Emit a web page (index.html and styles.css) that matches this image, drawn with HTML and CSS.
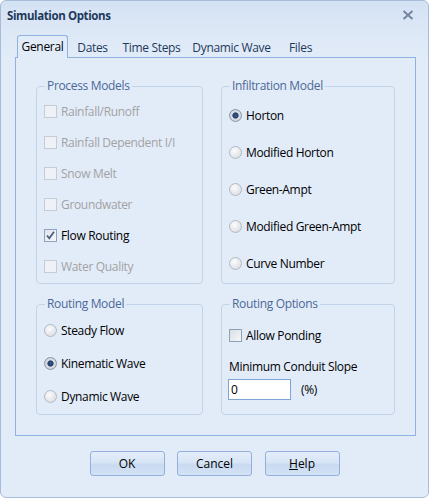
FILE: index.html
```html
<!DOCTYPE html>
<html>
<head>
  <title>Simulation Options</title>
  <link rel="stylesheet" href="styles.css">
</head>
<body>
  <div class="window">
    <div class="titlebar">
      <span class="title">Simulation Options</span>
      <svg class="close" width="12" height="10" viewBox="0 0 12 10">
        <path d="M1.5 1 L10.5 9 M10.5 1 L1.5 9" stroke="#75869e" stroke-width="2"/>
      </svg>
    </div>

    <div class="tabs">
      <div class="tab active" style="width:51px">General</div>
      <div class="tab" style="width:49px">Dates</div>
      <div class="tab" style="width:69px">Time Steps</div>
      <div class="tab" style="width:91px">Dynamic Wave</div>
      <div class="tab" style="width:47px">Files</div>
    </div>

    <div class="panel">
      <fieldset class="group">
        <legend>Process Models</legend>
        <div class="rows checks">
          <label class="item disabled"><span class="box"></span>Rainfall/Runoff</label>
          <label class="item disabled"><span class="box"></span>Rainfall Dependent I/I</label>
          <label class="item disabled"><span class="box"></span>Snow Melt</label>
          <label class="item disabled"><span class="box"></span>Groundwater</label>
          <label class="item"><span class="box checked">
            <svg width="11" height="11" viewBox="0 0 11 11"><path d="M2 5.5 L4.3 8.3 L9 1.8" fill="none" stroke="#4b5f7e" stroke-width="1.8"/></svg>
          </span>Flow Routing</label>
          <label class="item disabled"><span class="box"></span>Water Quality</label>
        </div>
      </fieldset>

      <fieldset class="group">
        <legend>Infiltration Model</legend>
        <div class="rows infil">
          <label class="item"><span class="radio on"></span>Horton</label>
          <label class="item"><span class="radio"></span>Modified Horton</label>
          <label class="item"><span class="radio"></span>Green-Ampt</label>
          <label class="item"><span class="radio"></span>Modified Green-Ampt</label>
          <label class="item"><span class="radio"></span>Curve Number</label>
        </div>
      </fieldset>

      <fieldset class="group">
        <legend>Routing Model</legend>
        <div class="rows routing">
          <label class="item"><span class="radio"></span>Steady Flow</label>
          <label class="item"><span class="radio on"></span>Kinematic Wave</label>
          <label class="item"><span class="radio"></span>Dynamic Wave</label>
        </div>
      </fieldset>

      <fieldset class="group">
        <legend>Routing Options</legend>
        <label class="item ponding"><span class="box"></span>Allow Ponding</label>
        <div class="slope-label">Minimum Conduit Slope</div>
        <div class="slope">
          <input type="text" value="0">
          <span>(%)</span>
        </div>
      </fieldset>
    </div>

    <div class="buttons">
      <button>OK</button>
      <button>Cancel</button>
      <button><u>H</u>elp</button>
    </div>
  </div>
</body>
</html>
```

FILE: styles.css
```css
body {
  margin: 0;
  background: #fff;
  font-family: "Open Sans", "Noto Sans", sans-serif;
  font-size: 12px;
  letter-spacing: -0.33px;
  color: #000;
}
.window {
  box-sizing: border-box;
  width: 429px;
  height: 498px;
  border: 1px solid #a7bcd8;
  border-radius: 6px;
  background: linear-gradient(#d3e2f4 0px, #dde8f6 30px, #e2ecf9 60px);
  overflow: hidden;
}
.titlebar {
  height: 28px;
  display: flex;
  align-items: center;
  justify-content: space-between;
  padding: 0 14px 0 6px;
}
.title {
  font-weight: bold;
  font-size: 11.5px;
  letter-spacing: -0.4px;
  color: #1e395b;
}

/* tabs */
.tabs {
  display: flex;
  align-items: flex-end;
  margin: 7px 0 -1px 16px;
  height: 22px;
  position: relative;
  z-index: 1;
}
.tab {
  height: 20px;
  line-height: 20px;
  text-align: center;
  color: #1e395b;
  box-sizing: border-box;
}
.tab.active {
  height: 23px;
  line-height: 21px;
  color: #000;
  background: #e2ecf9;
  border: 1px solid #8fb2e0;
  border-bottom: none;
  border-radius: 3px 3px 0 0;
}
.panel {
  margin-left: 14px;
  width: 401px;
  box-sizing: border-box;
  height: 379px;
  border: 1px solid #8fb2e0;
  background: #e2ecf9;
  padding: 20px;
  display: grid;
  grid-template-columns: 167px 174px;
  grid-template-rows: 206px 119px;
  column-gap: 18px;
  row-gap: 12px;
}

/* group boxes */
.group {
  margin: 0;
  padding: 0 0 0 7px;
  border: 1px solid #c3d3e8;
  border-radius: 4px;
  min-width: 0;
}
.group legend {
  padding: 0 2px;
  margin-left: 1px;
  line-height: 16px;
  color: #4c6896;
}
.rows {
  display: flex;
  flex-direction: column;
}
.item {
  display: flex;
  align-items: center;
  gap: 4px;
  white-space: nowrap;
}
.checks { padding-top: 2px; }
.checks .item { height: 31px; }
.infil { padding-top: 3px; }
.infil .item { height: 37px; }
.routing { padding-top: 2px; }
.routing .item { height: 33px; }
.item.disabled { color: #a2a2a2; }

.box {
  box-sizing: border-box;
  width: 13px;
  height: 13px;
  border: 1px solid #8f9fb6;
  background: linear-gradient(135deg, #d9dde3, #f7f8fa);
  display: flex;
  align-items: center;
  justify-content: center;
  flex: none;
}
.disabled .box {
  border-color: #c6ccd5;
  background: #eef1f5;
}
.box.checked {
  border-color: #8ea3c2;
  background: linear-gradient(135deg, #dfe4ec, #f6f8fb);
}
.radio {
  box-sizing: border-box;
  width: 13px;
  height: 13px;
  border-radius: 50%;
  border: 1px solid #b3b9c2;
  background: radial-gradient(circle at 40% 35%, #fcfcfd, #d4d7dc);
  flex: none;
}
.radio.on {
  border-color: #8c96a6;
  background: radial-gradient(circle at 50% 50%, #3f5f8e 0, #1f3c66 2.6px, #dde1e7 3.6px, #c8cdd4 6px);
}

.ponding {
  margin-top: 15px;
  height: 16px;
}
.slope-label {
  margin-top: 16px;
  line-height: 16px;
  white-space: nowrap;
}
.slope {
  margin-top: 4px;
  display: flex;
  align-items: center;
  gap: 10px;
  margin-left: -1px;
}
.slope input {
  box-sizing: border-box;
  width: 63px;
  height: 21px;
  border: 1px solid #7ea3d6;
  padding: 0 2px;
  font: inherit;
  background: #fff;
  outline: none;
}

/* bottom buttons */
.buttons {
  display: flex;
  justify-content: center;
  gap: 12.5px;
  margin-top: 15px;
}
.buttons button {
  width: 75px;
  height: 25px;
  font: inherit;
  color: #000;
  border: 1px solid #93afdb;
  border-radius: 3px;
  background: linear-gradient(#e4edf9 0%, #d8e5f6 45%, #c9daf1 55%, #d3e2f5 100%);
}
```
